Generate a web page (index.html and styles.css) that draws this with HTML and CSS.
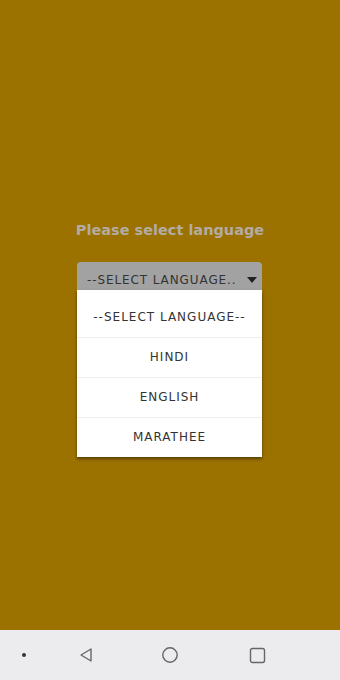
FILE: index.html
```html
<!DOCTYPE html>
<html lang="en">
<head>
    <meta charset="UTF-8">
    <meta name="viewport" content="width=device-width, initial-scale=1.0">
    <title>Select language</title>
    <link rel="stylesheet" href="styles.css">
</head>
<body>
    <div class="screen">
        <div class="content">
            <h1 class="title">Please select language</h1>
            <div class="picker">
                <div class="spinner">
                    <span>--SELECT LANGUAGE..</span>
                    <span class="arrow"></span>
                </div>
                <ul class="dropdown">
                    <li>--SELECT LANGUAGE--</li>
                    <li>HINDI</li>
                    <li>ENGLISH</li>
                    <li>MARATHEE</li>
                </ul>
            </div>
        </div>
        <!-- navigation bar -->
        <div class="nav-bar">
            <span class="nav-dot"></span>
            <svg width="16" height="16" viewBox="0 0 16 16"><path d="M13 2 L3 8 L13 14 Z" fill="none" stroke="#666" stroke-width="1.4" stroke-linejoin="round"/></svg>
            <svg width="18" height="18" viewBox="0 0 18 18"><circle cx="9" cy="9" r="7.2" fill="none" stroke="#666" stroke-width="1.4"/></svg>
            <svg width="17" height="17" viewBox="0 0 17 17"><rect x="1.5" y="1.5" width="14" height="14" rx="2" fill="none" stroke="#666" stroke-width="1.4"/></svg>
        </div>
    </div>
</body>
</html>
```

FILE: styles.css
```css
html, body {
    margin: 0;
    height: 100%;
}
body {
    font-family: "DejaVu Sans", sans-serif;
}
.screen {
    height: 680px;
    display: flex;
    flex-direction: column;
}
.content {
    flex: 1;
    background: #9b7100;
    padding-top: 220px;
    display: flex;
    flex-direction: column;
    align-items: center;
}
.title {
    margin: 0;
    font-size: 14.5px;
    line-height: 20px;
    font-weight: bold;
    color: #b4aca2;
}
.picker {
    width: 185px;
    margin-top: 22px;
    margin-right: 1px;
}
.spinner {
    height: 28px;
    background: #a2a2a2;
    border-radius: 4px 4px 0 0;
    display: flex;
    align-items: center;
    justify-content: space-between;
    padding: 8px 5px 0 10px;
    font-size: 12px;
    letter-spacing: 0.9px;
    color: #333;
    box-sizing: border-box;
}
.arrow {
    width: 0;
    height: 0;
    border-left: 5px solid transparent;
    border-right: 5px solid transparent;
    border-top: 6px solid #222;
}
.dropdown {
    list-style: none;
    margin: 0;
    padding: 8px 0 0;
    background: #fff;
    box-shadow: 0 2px 3px rgba(0, 0, 0, 0.45);
}
.dropdown li {
    height: 39px;
    line-height: 39px;
    text-align: center;
    font-size: 12px;
    letter-spacing: 1px;
    color: #333;
    border-top: 1px solid #eee;
}
.dropdown li:first-child {
    border-top: none;
}
.nav-bar {
    height: 50px;
    background: #ececee;
    display: flex;
    align-items: center;
    padding-left: 22px;
}
.nav-dot {
    width: 4px;
    height: 4px;
    border-radius: 50%;
    background: #333;
    margin-right: 52px;
}
.nav-bar svg:nth-of-type(1) {
    margin-right: 67px;
}
.nav-bar svg:nth-of-type(2) {
    margin-right: 70px;
}
```
